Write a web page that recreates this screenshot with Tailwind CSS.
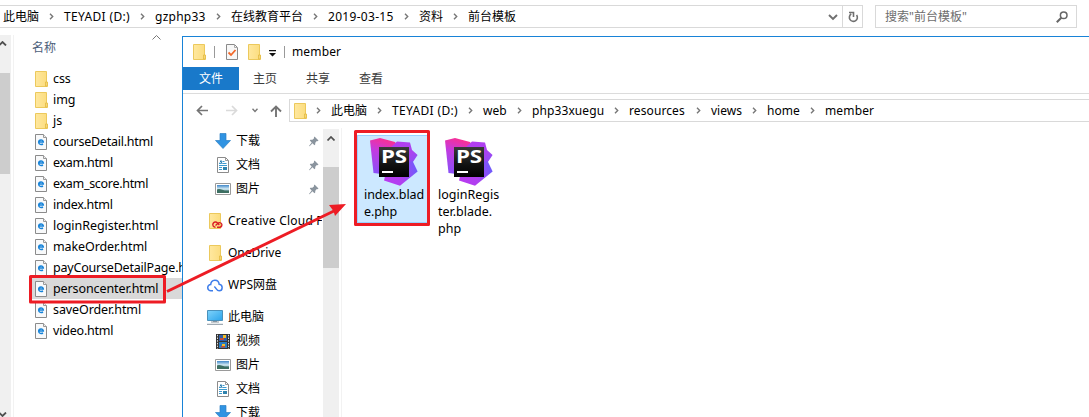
<!DOCTYPE html>
<html lang="zh-CN">
<head>
<meta charset="utf-8">
<title>member</title>
<script src="https://cdn.jsdelivr.net/npm/@tailwindcss/browser@4"></script>
</head>
<body class="relative w-[1089px] h-[417px] overflow-hidden bg-white text-black text-[12px] leading-[20px] whitespace-nowrap font-['Noto_Sans','Noto_Sans_CJK_SC',sans-serif]">

<svg class="absolute w-0 h-0">
  <defs>
    <linearGradient id="gold" x1="0" x2="1"><stop offset="0" stop-color="#ffe89f"/><stop offset="1" stop-color="#fbdc7d"/></linearGradient>
    <linearGradient id="screen" x1="0" x2="1" y2="1"><stop offset="0" stop-color="#7fd3fb"/><stop offset="1" stop-color="#2ba3ea"/></linearGradient>
    <linearGradient id="photo" x2="0" y2="1"><stop offset="0" stop-color="#3f87c9"/><stop offset=".5" stop-color="#d5ecf4"/><stop offset="1" stop-color="#1b5a75"/></linearGradient>
    <linearGradient id="psA" gradientUnits="userSpaceOnUse" x1="14" y1="0" x2="3" y2="34"><stop offset="0" stop-color="#fb2f91"/><stop offset=".4" stop-color="#c33be0"/><stop offset="1" stop-color="#8a50f7"/></linearGradient>
    <linearGradient id="psB" gradientUnits="userSpaceOnUse" x1="26" y1="4" x2="48" y2="34"><stop offset="0" stop-color="#b43df0"/><stop offset=".5" stop-color="#a843f0"/><stop offset="1" stop-color="#6c5cfb"/></linearGradient>
    <linearGradient id="psC" gradientUnits="userSpaceOnUse" x1="14" y1="40" x2="48" y2="34"><stop offset="0" stop-color="#b93bf0"/><stop offset=".5" stop-color="#b03ff0"/><stop offset="1" stop-color="#6c5cfb"/></linearGradient>
    <linearGradient id="psK" x2="0" y2="1"><stop offset="0" stop-color="#3a3a3a"/><stop offset=".6" stop-color="#111"/><stop offset="1" stop-color="#000"/></linearGradient>
  </defs>
  <symbol id="folder" viewBox="0 0 13 16"><path d="M.5 .5h11v10.500h1v4.500H.5z" fill="url(#gold)" stroke="#ecc95c"/><path d="M10.500 15v-4h1.500v4z" fill="#ffe9a3" stroke="#e3b93c" stroke-width=".8"/></symbol>
  <symbol id="html" viewBox="0 0 12 16"><path d="M.5 .5h8l3 3v12H.5z" fill="#f8f9fa" stroke="#8b8b8b"/><path d="M8.500 .5v3h3" fill="#eee" stroke="#999"/><path d="M3.500 8.100h4.800c0-2.800-4.600-2.800-4.600.2 0 2.400 2.800 2.600 4.300 1.700" fill="none" stroke="#1683d9" stroke-width="1.500"/></symbol>
  <symbol id="crumb" viewBox="0 0 5 7"><path d="M1 .8 3.700 3.500 1 6.200" fill="none" stroke="#777" stroke-width="1.400"/></symbol>
  <symbol id="pin" viewBox="0 0 10 11"><path d="M5.500 .5 9.500 4.500 8.500 5.200 7.800 5 6.300 6.700 6.200 8.600 5.400 9.200 3.500 7.300 .6 10.300 0 9.900 2.700 6.500 .8 4.600 1.400 3.800 3.400 3.700 5.100 2.200 4.900 1.400z" fill="#8a949e"/></symbol>
  <symbol id="down" viewBox="0 0 16 16"><path d="M5 .5h6v7h4.500L8 15.500.5 7.500H5z" fill="#3093e2" stroke="#2b7fc4" stroke-width=".7"/></symbol>
  <symbol id="doc" viewBox="0 0 12 16"><path d="M.5 .5h8l3 3v12H.5z" fill="#fff" stroke="#8b8b8b"/><path d="M8.500 .5v3h3" fill="none" stroke="#999"/><path d="M2 6.500h2M5.500 4.500h2M5.500 6.500h4M2 8.500h8M2 10.500h3M2 12.500h3" stroke="#3c9bd0"/><path d="M3 5.500l1-2 1 3.500" fill="none" stroke="#2679ad"/><path d="M6 10h4v3H6z" fill="#2f83ad"/></symbol>
  <symbol id="pic" viewBox="0 0 16 12"><path d="M.5 .5h15v11H.5z" fill="#fff" stroke="#9a9a9a"/><path d="M2 2h12v8H2z" fill="url(#photo)"/><path d="M2 6.500c3-2 5 1.500 12 1V10H2z" fill="#3d6f62"/></symbol>
  <symbol id="ps" viewBox="0 0 48 48">
    <path d="M0 2.500 10 0 25 4 30 12 20 37 3.500 35z" fill="url(#psA)"/>
    <path d="M20 10 27 3.500 40 4.500 42 12 47.600 17 42.600 24.500 42 34 20 30z" fill="url(#psB)"/>
    <path d="M42.600 23 47.600 33.500 30 47.800 14 42.600 16 34 30 26z" fill="url(#psC)"/>
    <path d="M9 9h30v30H9z" fill="url(#psK)"/><path d="M12 33h11v2H12z" fill="#fff"/>
  </symbol>
</svg>

<!-- Background window: address and search -->
<header class="flex h-[35px] pt-[5px]">
  <div class="flex w-[863px] h-[23px] border-y border-r border-[#d9d9d9]">
    <nav class="flex items-center flex-1 pl-[3px]">
      <span class="w-[36px]">此电脑</span><svg class="w-[5px] h-[7px] mx-[10px]"><use href="#crumb"/></svg>
      <span class="w-[66px] tracking-[0.35px]">TEYADI (D:)</span><svg class="w-[5px] h-[7px] mx-[10px]"><use href="#crumb"/></svg>
      <span class="w-[51px] tracking-[0.25px]">gzphp33</span><svg class="w-[5px] h-[7px] mx-[10px]"><use href="#crumb"/></svg>
      <span class="w-[72px]">在线教育平台</span><svg class="w-[5px] h-[7px] mx-[10px]"><use href="#crumb"/></svg>
      <span class="w-[66px] tracking-[0.3px]">2019-03-15</span><svg class="w-[5px] h-[7px] mx-[10px]"><use href="#crumb"/></svg>
      <span class="w-[24px]">资料</span><svg class="w-[5px] h-[7px] mx-[10px]"><use href="#crumb"/></svg>
      <span>前台模板</span>
    </nav>
    <svg class="w-[10px] h-[7px] mr-[4px] mt-[8px]" viewBox="0 0 10 7"><path d="M1 1l4 4 4-4" fill="none" stroke="#707070" stroke-width="1.900"/></svg>
    <div class="w-[20px] border-l border-[#d9d9d9] pl-[5px] pt-[5px]">
      <svg class="w-[11px] h-[12px]" viewBox="0 0 11 12"><path d="M3.200 3A4 4 0 1 0 8.600 4M1 1.500h4.500V6" fill="none" stroke="#707070" stroke-width="1.600"/></svg>
    </div>
  </div>
  <div class="flex justify-between w-[202px] h-[23px] ml-[12px] border border-[#d9d9d9] pl-[9px] pr-[8px]">
    <span class="text-[#6d6d6d] leading-[22px]">搜索"前台模板"</span>
    <svg class="w-[12px] h-[12px] mt-[5px]" viewBox="0 0 12 12"><circle cx="7.700" cy="4.300" r="3.300" fill="none" stroke="#666" stroke-width="1.500"/><path d="M5.300 6.700.8 11.200" stroke="#666" stroke-width="2"/></svg>
  </div>
</header>

<!-- Background window: file list -->
<main class="flex h-[382px]">
  <div class="flex flex-col w-[11px] bg-[#f0f0f0]">
    <svg class="w-[7px] h-[5px] mt-[6px] shrink-0" viewBox="0 0 7 5"><path d="M-1 4.500 2.500 1 6 4.500" fill="none" stroke="#505050" stroke-width="1.800"/></svg>
    <div class="w-[10px] h-[101px] bg-[#cdcdcd] mt-[27px]"></div>
    <svg class="w-[7px] h-[5px] mt-auto shrink-0" viewBox="0 0 7 5"><path d="M-1 .5 2.500 4 6 .5" fill="none" stroke="#505050" stroke-width="1.800"/></svg>
  </div>
  <div class="flex-1 ml-[2px] border-l border-[#f2f2f2] pl-[18px]">
    <div class="flex h-[33px] text-[#4c607a]">
      <span class="w-[120px] pt-[3px]">名称</span>
      <svg class="w-[9px] h-[5px]" viewBox="0 0 9 5"><path d="M.5 4.500l4-4 4 4" fill="none" stroke="#777"/></svg>
    </div>
    <ul class="w-[152px] text-[12.5px] tracking-[-0.1px] leading-[21px] overflow-hidden">
      <li class="flex items-center gap-[5px] h-[21px] pl-[3px]"><svg class="w-[13px] h-[16px]"><use href="#folder"/></svg>css</li>
      <li class="flex items-center gap-[5px] h-[21px] pl-[3px]"><svg class="w-[13px] h-[16px]"><use href="#folder"/></svg>img</li>
      <li class="flex items-center gap-[5px] h-[21px] pl-[3px]"><svg class="w-[13px] h-[16px]"><use href="#folder"/></svg>js</li>
      <li class="flex items-center gap-[6px] h-[21px] pl-[3px] tracking-[-0.25px]"><svg class="w-[12px] h-[16px]"><use href="#html"/></svg>courseDetail.html</li>
      <li class="flex items-center gap-[6px] h-[21px] pl-[3px] tracking-[-0.3px]"><svg class="w-[12px] h-[16px]"><use href="#html"/></svg>exam.html</li>
      <li class="flex items-center gap-[6px] h-[21px] pl-[3px] tracking-[-0.3px]"><svg class="w-[12px] h-[16px]"><use href="#html"/></svg>exam_score.html</li>
      <li class="flex items-center gap-[6px] h-[21px] pl-[3px] tracking-[-0.3px]"><svg class="w-[12px] h-[16px]"><use href="#html"/></svg>index.html</li>
      <li class="flex items-center gap-[6px] h-[21px] pl-[3px] tracking-[-0.05px]"><svg class="w-[12px] h-[16px]"><use href="#html"/></svg>loginRegister.html</li>
      <li class="flex items-center gap-[6px] h-[21px] pl-[3px]"><svg class="w-[12px] h-[16px]"><use href="#html"/></svg>makeOrder.html</li>
      <li class="flex items-center gap-[6px] h-[21px] pl-[3px] tracking-[-0.2px]"><svg class="w-[12px] h-[16px] shrink-0"><use href="#html"/></svg>payCourseDetailPage.html</li>
      <li class="flex items-center gap-[6px] h-[21px] pl-[3px] bg-[#d9d9d9]"><svg class="w-[12px] h-[16px]"><use href="#html"/></svg>personcenter.html</li>
      <li class="flex items-center gap-[6px] h-[21px] pl-[3px]"><svg class="w-[12px] h-[16px]"><use href="#html"/></svg>saveOrder.html</li>
      <li class="flex items-center gap-[6px] h-[21px] pl-[3px] tracking-[-0.2px]"><svg class="w-[12px] h-[16px]"><use href="#html"/></svg>video.html</li>
    </ul>
  </div>
</main>

<!-- Foreground window -->
<section class="absolute left-[182px] top-[36px] w-[907px] h-[381px] flex flex-col bg-white border-t border-l border-[#1883d7] overflow-hidden">
  <div class="flex items-center h-[30px] pl-[10px]">
    <svg class="w-[13px] h-[16px]"><use href="#folder"/></svg>
    <i class="w-px h-[12px] bg-[#999] ml-[8px]"></i>
    <svg class="w-[12px] h-[16px] ml-[11px]" viewBox="0 0 12 16"><path d="M.5 .5h8l3 3v12H.5z" fill="#f7f7f7" stroke="#8a8a8a"/><path d="M8.500 .5v3h3" fill="none" stroke="#aaa"/><path d="M2.500 8.500 5 11l4.500-5" fill="none" stroke="#f2682a" stroke-width="1.800"/></svg>
    <svg class="w-[13px] h-[16px] ml-[10px]"><use href="#folder"/></svg>
    <svg class="w-[7px] h-[7px] ml-[8px] mt-[2px]" viewBox="0 0 7 7"><path d="M0 0h7v1.300H0zM0 3h7L3.500 6.500z" fill="#111"/></svg>
    <i class="w-px h-[12px] bg-[#999] ml-[8px]"></i>
    <span class="ml-[7px] tracking-[0.15px]">member</span>
  </div>
  <div class="flex h-[27px] border-b border-[#dcdcdc] leading-[24px] text-[#3b3b3b]">
    <span class="w-[56px] h-[23px] bg-[#1979ca] text-white text-center">文件</span>
    <span class="ml-[14px]">主页</span>
    <span class="ml-[29px]">共享</span>
    <span class="ml-[29px]">查看</span>
  </div>
  <div class="flex h-[34px] pt-[5px]">
    <div class="flex items-center w-[106px] pl-[13px] pb-[6px]">
      <svg class="w-[12px] h-[11px]" viewBox="0 0 12 11"><path d="M12 5.500H1.500M6 1 1.500 5.500 6 10" fill="none" stroke="#747474" stroke-width="1.700"/></svg>
      <svg class="w-[12px] h-[11px] ml-[18px]" viewBox="0 0 12 11"><path d="M0 5.500h10.500M6 1l4.500 4.500L6 10" fill="none" stroke="#dadada" stroke-width="1.700"/></svg>
      <svg class="w-[6px] h-[5px] ml-[14px]" viewBox="0 0 6 5"><path d="M.5 .8 3 3.500 5.500 .8" fill="none" stroke="#777" stroke-width="1.400"/></svg>
      <svg class="w-[12px] h-[12px] ml-[12px]" viewBox="0 0 12 12"><path d="M6 12V1.500M1 6.500l5-5 5 5" fill="none" stroke="#747474" stroke-width="1.900"/></svg>
    </div>
    <nav class="flex items-center flex-1 h-[23px] border-y border-l border-[#d9d9d9] pl-[4px]">
      <svg class="w-[13px] h-[16px]"><use href="#folder"/></svg><svg class="w-[5px] h-[7px] ml-[9px] mr-[10px]"><use href="#crumb"/></svg>
      <span class="w-[36px]">此电脑</span><svg class="w-[5px] h-[7px] mx-[10px]"><use href="#crumb"/></svg>
      <span class="w-[66px] tracking-[0.35px]">TEYADI (D:)</span><svg class="w-[5px] h-[7px] mx-[10px]"><use href="#crumb"/></svg>
      <span class="w-[24px]">web</span><svg class="w-[5px] h-[7px] mx-[10px]"><use href="#crumb"/></svg>
      <span class="w-[72px] tracking-[0.1px]">php33xuegu</span><svg class="w-[5px] h-[7px] mx-[10px]"><use href="#crumb"/></svg>
      <span class="w-[57px] tracking-[0.1px]">resources</span><svg class="w-[5px] h-[7px] mx-[10px]"><use href="#crumb"/></svg>
      <span class="w-[31px]">views</span><svg class="w-[5px] h-[7px] mx-[10px]"><use href="#crumb"/></svg>
      <span class="w-[33px]">home</span><svg class="w-[5px] h-[7px] mx-[10px]"><use href="#crumb"/></svg>
      <span class="tracking-[0.15px]">member</span>
    </nav>
  </div>
  <div class="flex flex-1 min-h-0">
    <aside class="w-[140px] h-[300px] pt-px">
      <div class="flex items-center h-[24px] pl-[32px]"><svg class="w-[16px] h-[16px] mr-[5px]"><use href="#down"/></svg>下载<svg class="w-[10px] h-[11px] ml-auto mr-[4px]"><use href="#pin"/></svg></div>
      <div class="flex items-center h-[24px] pl-[34px]"><svg class="w-[12px] h-[16px] mr-[7px]"><use href="#doc"/></svg>文档<svg class="w-[10px] h-[11px] ml-auto mr-[4px]"><use href="#pin"/></svg></div>
      <div class="flex items-center h-[24px] pl-[32px]"><svg class="w-[16px] h-[12px] mr-[5px]"><use href="#pic"/></svg>图片<svg class="w-[10px] h-[11px] ml-auto mr-[4px]"><use href="#pin"/></svg></div>
      <div class="flex items-center h-[24px] mt-[8px] pl-[26px] overflow-hidden w-[139px] tracking-[0.22px]"><svg class="w-[14px] h-[16px] mr-[5px] shrink-0" viewBox="0 0 14 16"><path d="M.5 .5h11v15H.5z" fill="url(#gold)" stroke="#ecc95c"/><path d="M6.500 14.200a2.600 2.600 0 1 1 1.800-4.400l2 2.200M8 14.200h3a2.300 2.300 0 1 0-2.200-3.700L6.500 12.500" fill="none" stroke="#da1f26" stroke-width="1.400"/></svg>Creative Cloud Files</div>
      <div class="flex items-center h-[24px] mt-[8px] pl-[26px]"><svg class="w-[13px] h-[16px] mr-[6px]"><use href="#folder"/></svg>OneDrive</div>
      <div class="flex items-center h-[24px] mt-[8px] pl-[24px]"><svg class="w-[16px] h-[13px] mr-[5px]" viewBox="0 0 16 13"><path d="M6 11.800H4A3 3 0 0 1 3.700 5.600C4 0 11.500-.5 12.200 5.300c4 .4 3.800 6.500 0 6.500-2.700 0-3-3.200-5-4.200" fill="none" stroke="#3f7eea" stroke-width="1.500"/></svg>WPS网盘</div>
      <div class="flex items-center h-[24px] mt-[8px] pl-[24px]"><svg class="w-[16px] h-[15px] mr-[5px]" viewBox="0 0 16 15"><path d="M.5 .5h15v10H.5z" fill="url(#screen)" stroke="#4a91bb"/><path d="M4 12h8M0 14.300h16M6 11.500h4" stroke="#8795a0"/></svg>此电脑</div>
      <div class="flex items-center h-[24px] pl-[33px]"><svg class="w-[14px] h-[15px] mr-[6px]" viewBox="0 0 14 15"><path d="M0 0h14v15H0z" fill="#333"/><path d="M1.500 .8v14M12.500 .8v14" stroke="#ddd" stroke-dasharray="1.500 1.200"/><path d="M3 1h8v6H3z" fill="#315ea9"/><path d="M3 8h8v6H3z" fill="#297bc2"/><path d="M7 1h3v3H7zM6 10h3v2H6z" fill="#f2bd25"/><path d="M4 4h4v2H4zM5 12h4v1.500H5z" fill="#c44f36"/></svg>视频</div>
      <div class="flex items-center h-[24px] pl-[32px]"><svg class="w-[16px] h-[12px] mr-[5px]"><use href="#pic"/></svg>图片</div>
      <div class="flex items-center h-[24px] pl-[34px]"><svg class="w-[12px] h-[16px] mr-[7px]"><use href="#doc"/></svg>文档</div>
      <div class="flex items-center h-[24px] pl-[32px]"><svg class="w-[16px] h-[16px] mr-[5px]"><use href="#down"/></svg>下载</div>
    </aside>
    <div class="w-[16px] h-[300px] bg-[#f0f0f0] mt-[1px]">
      <svg class="w-[8px] h-[5px] mx-[4px] mt-[7px]" viewBox="0 0 8 5"><path d="M.5 4.500 4 1l3.500 3.500" fill="none" stroke="#505050" stroke-width="1.700"/></svg>
      <div class="h-[101px] mt-[26px] bg-[#cdcdcd]"></div>
    </div>
    <div class="flex flex-1 ml-[2px] border-l border-[#f2f2f2] pt-[7px] pl-[15px] text-[12.5px] tracking-[-0.1px] leading-[17px]">
      <div class="w-[72px] h-[88px] bg-[#cce8ff] border border-[#99d1ff] pl-[6px] pt-[2px]">
        <svg class="w-[48px] h-[48px] ml-[6px]" viewBox="0 0 48 48"><use href="#ps"/><text x="11" y="25" class="font-['Open_Sans',sans-serif] font-bold text-[18px] fill-white" textLength="26" lengthAdjust="spacingAndGlyphs">PS</text></svg>
        <p>index.blad<br>e.php</p>
      </div>
      <div class="w-[74px] pl-[9px] pt-[3px]">
        <svg class="w-[48px] h-[48px] ml-[7px]" viewBox="0 0 48 48"><use href="#ps"/><text x="11" y="25" class="font-['Open_Sans',sans-serif] font-bold text-[18px] fill-white" textLength="26" lengthAdjust="spacingAndGlyphs">PS</text></svg>
        <p class="tracking-[0px]">loginRegis<br>ter.blade.<br>php</p>
      </div>
    </div>
  </div>
</section>

<!-- Callouts -->
<svg class="absolute left-0 top-0 w-[1089px] h-[417px] pointer-events-none" viewBox="0 0 1089 417">
  <g fill="none" stroke="#ed1c24" stroke-width="3" stroke-linejoin="round"><rect x="30.500" y="276.500" width="134" height="25.500"/><rect x="355.500" y="131.500" width="73" height="93"/><path d="M167 291.500 336 210"/></g>
  <path d="M346 204 335 216 333.500 211 329 205z" fill="#ed1c24"/>
</svg>
</body>
</html>
